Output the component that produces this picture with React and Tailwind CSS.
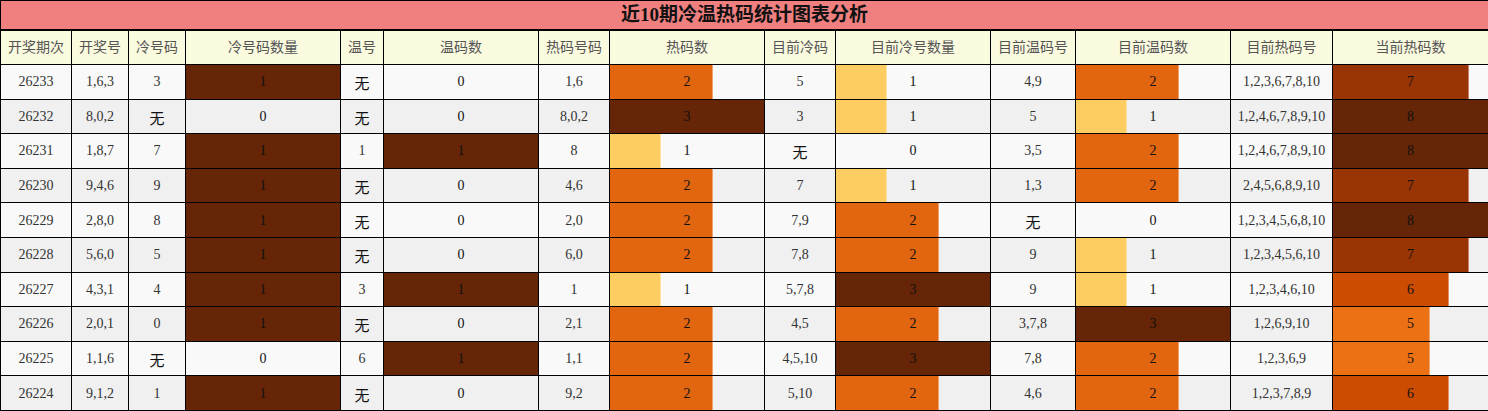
const HEAD = [
  "开奖期次", "开奖号", "冷号码", "冷号码数量", "温号", "温码数", "热码号码",
  "热码数", "目前冷码", "目前冷号数量", "目前温码号", "目前温码数", "目前热码号", "当前热码数",
];

const WIDTHS = [71, 57, 57, 155, 43, 155, 71, 155, 71, 155, 85, 155, 102, 156];

// columns that are drawn as bars, with their max
const BARS = { 3: 1, 5: 1, 7: 3, 9: 3, 11: 3, 13: 8 };

const ROWS = [
  ["26233", "1,6,3", "3", 1, "无", 0, "1,6", 2, "5", 1, "4,9", 2, "1,2,3,6,7,8,10", 7],
  ["26232", "8,0,2", "无", 0, "无", 0, "8,0,2", 3, "3", 1, "5", 1, "1,2,4,6,7,8,9,10", 8],
  ["26231", "1,8,7", "7", 1, "1", 1, "8", 1, "无", 0, "3,5", 2, "1,2,4,6,7,8,9,10", 8],
  ["26230", "9,4,6", "9", 1, "无", 0, "4,6", 2, "7", 1, "1,3", 2, "2,4,5,6,8,9,10", 7],
  ["26229", "2,8,0", "8", 1, "无", 0, "2,0", 2, "7,9", 2, "无", 0, "1,2,3,4,5,6,8,10", 8],
  ["26228", "5,6,0", "5", 1, "无", 0, "6,0", 2, "7,8", 2, "9", 1, "1,2,3,4,5,6,10", 7],
  ["26227", "4,3,1", "4", 1, "3", 1, "1", 1, "5,7,8", 3, "9", 1, "1,2,3,4,6,10", 6],
  ["26226", "2,0,1", "0", 1, "无", 0, "2,1", 2, "4,5", 2, "3,7,8", 3, "1,2,6,9,10", 5],
  ["26225", "1,1,6", "无", 0, "6", 1, "1,1", 2, "4,5,10", 3, "7,8", 2, "1,2,3,6,9", 5],
  ["26224", "9,1,2", "1", 1, "无", 0, "9,2", 2, "5,10", 2, "4,6", 2, "1,2,3,7,8,9", 6],
];

const COLORS = {
  "1/1": "bg-[#662506]",
  "3/3": "bg-[#662506]",
  "8/8": "bg-[#662506]",
  "7/8": "bg-[#993404]",
  "6/8": "bg-[#cc4c02]",
  "5/8": "bg-[#ec7014]",
  "2/3": "bg-[#e26510]",
  "1/3": "bg-[#fecd61]",
};

function BarCell({ value, max }) {
  const pct = (value / max) * 100;
  return (
    <td className="relative border border-black p-0">
      {value > 0 && (
        <div
          className={`absolute left-0 top-0 bottom-0 ${COLORS[`${value}/${max}`]} ${
            value < max ? "border-r border-white/40" : ""
          }`}
          style={{ width: `${pct}%` }}
        />
      )}
      <span className="relative text-[#111]">{value}</span>
    </td>
  );
}

export default function App() {
  return (
    <div className="w-[1488px] h-[411px] overflow-hidden bg-white">
      <table
        className="w-[1488px] table-fixed border-collapse text-center text-[14px] text-[#333]"
        style={{ fontFamily: '"Liberation Serif", "Noto Sans CJK SC", serif' }}
      >
        <colgroup>
          {WIDTHS.map((w, i) => (
            <col key={i} style={{ width: w }} />
          ))}
        </colgroup>
        <thead>
          <tr className="h-[29px]">
            <th
              colSpan={14}
              className="border border-black border-b-2 bg-[#f08080] p-0 text-[19px] leading-[26px] font-bold text-[#111]"
            >
              近10期冷温热码统计图表分析
            </th>
          </tr>
          <tr className="h-[35px] bg-[#fafadf]">
            {HEAD.map((h) => (
              <th key={h} className="border border-black p-0 font-normal text-[#555] whitespace-nowrap">
                {h}
              </th>
            ))}
          </tr>
        </thead>
        <tbody>
          {ROWS.map((row, r) => (
            <tr key={row[0]} className={`h-[34.6px] ${r % 2 ? "bg-[#f0f0f0]" : "bg-[#f9f9f9]"}`}>
              {row.map((cell, c) =>
                BARS[c] ? (
                  <BarCell key={c} value={cell} max={BARS[c]} />
                ) : cell === "无" ? (
                  <td key={c} className="border border-black p-0 text-[15px] leading-none text-[#111]">
                    <span className="relative top-[3px]">无</span>
                  </td>
                ) : (
                  <td key={c} className="border border-black p-0 whitespace-nowrap">
                    {cell}
                  </td>
                )
              )}
            </tr>
          ))}
        </tbody>
      </table>
    </div>
  );
}
